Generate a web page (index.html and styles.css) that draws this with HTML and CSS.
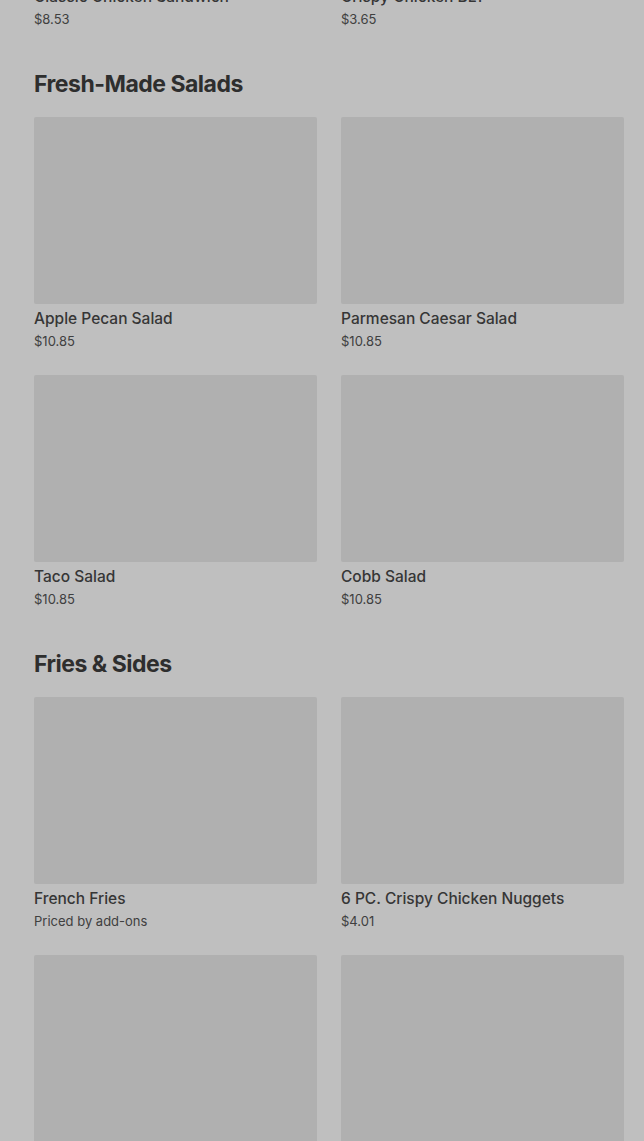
FILE: index.html
```html
<!DOCTYPE html>
<html lang="en">
<head>
    <meta charset="UTF-8">
    <meta name="viewport" content="width=device-width, initial-scale=1.0">
    <title>Menu</title>
    <link rel="stylesheet" href="styles.css">
</head>
<body>
    <main class="menu">
        <section class="menu-section first">
            <div class="grid">
                <div class="card">
                    <div class="card-img"></div>
                    <div class="card-name">Classic Chicken Sandwich</div>
                    <div class="card-price">$8.53</div>
                </div>
                <div class="card">
                    <div class="card-img"></div>
                    <div class="card-name">Crispy Chicken BLT</div>
                    <div class="card-price">$3.65</div>
                </div>
            </div>
        </section>

        <section class="menu-section">
            <h2>Fresh-Made Salads</h2>
            <div class="grid">
                <div class="card">
                    <div class="card-img"></div>
                    <div class="card-name">Apple Pecan Salad</div>
                    <div class="card-price">$10.85</div>
                </div>
                <div class="card">
                    <div class="card-img"></div>
                    <div class="card-name">Parmesan Caesar Salad</div>
                    <div class="card-price">$10.85</div>
                </div>
                <div class="card">
                    <div class="card-img"></div>
                    <div class="card-name">Taco Salad</div>
                    <div class="card-price">$10.85</div>
                </div>
                <div class="card">
                    <div class="card-img"></div>
                    <div class="card-name">Cobb Salad</div>
                    <div class="card-price">$10.85</div>
                </div>
            </div>
        </section>

        <section class="menu-section">
            <h2>Fries &amp; Sides</h2>
            <div class="grid">
                <div class="card">
                    <div class="card-img"></div>
                    <div class="card-name">French Fries</div>
                    <div class="card-price">Priced by add-ons</div>
                </div>
                <div class="card">
                    <div class="card-img"></div>
                    <div class="card-name">6 PC. Crispy Chicken Nuggets</div>
                    <div class="card-price">$4.01</div>
                </div>
                <div class="card">
                    <div class="card-img"></div>
                </div>
                <div class="card">
                    <div class="card-img"></div>
                </div>
            </div>
        </section>
    </main>
</body>
</html>
```

FILE: styles.css
```css
html, body {
    margin: 0;
    padding: 0;
    background-color: #bfbfbf;
}
body {
    font-family: Inter, "Noto Sans", Arial, sans-serif;
    color: #333;
    overflow: hidden;
    height: 1141px;
}
.menu {
    padding: 0 20px 0 34px;
}
.menu-section {
    margin-bottom: 40px;
}
.menu-section.first {
    margin-top: -205px;
}
.menu-section h2 {
    margin: 0 0 17px;
    font-size: 23px;
    line-height: 32px;
    font-weight: 700;
    letter-spacing: -0.5px;
    color: #2e2e2e;
}
.grid {
    display: grid;
    grid-template-columns: 283px 283px;
    column-gap: 24px;
    row-gap: 25px;
}
.card-img {
    height: 187px;
    background-color: #b0b0b0;
    border-radius: 2px;
}
.card-name {
    margin-top: 5px;
    font-size: 15.5px;
    line-height: 20px;
    font-weight: 500;
    color: #363636;
}
.card-price {
    margin-top: 3px;
    font-size: 13px;
    line-height: 18px;
    color: #404040;
}
```
